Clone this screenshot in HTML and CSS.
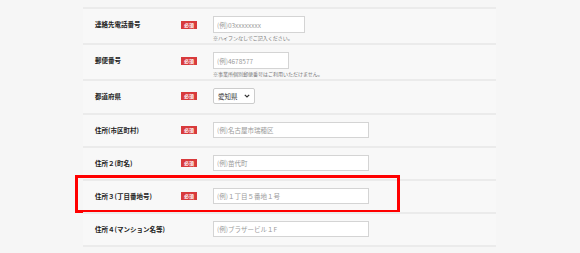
FILE: index.html
```html
<!DOCTYPE html>
<html lang="ja">
	<head>
		<meta charset="UTF-8" />
		<meta name="viewport" content="width=device-width, initial-scale=1.0" />
		<title>お客様情報入力</title>
		<link rel="stylesheet" href="styles.css">
	</head>
	<body>

		<div class="form">
			<div class="row row-note">
				<div class="label">連絡先電話番号</div>
				<div class="req"><span>必須</span></div>
				<div class="field">
					<input class="input w-tel" type="text" placeholder="(例)03xxxxxxxx">
					<p class="note">※ハイフンなしでご記入ください。</p>
				</div>
			</div>

			<div class="row row-note">
				<div class="label">郵便番号</div>
				<div class="req"><span>必須</span></div>
				<div class="field">
					<input class="input w-zip" type="text" placeholder="(例)4678577">
					<p class="note">※事業所個別郵便番号はご利用いただけません。</p>
				</div>
			</div>

			<div class="row row-select">
				<div class="label">都道府県</div>
				<div class="req"><span>必須</span></div>
				<div class="field">
					<div class="select">
						<span>愛知県</span>
						<svg width="6" height="4" viewBox="0 0 6 4"><path d="M0.8 0.8 L3 3 L5.2 0.8" fill="none" stroke="#333" stroke-width="1.2"/></svg>
					</div>
				</div>
			</div>

			<div class="row">
				<div class="label">住所(市区町村)</div>
				<div class="req"><span>必須</span></div>
				<div class="field">
					<input class="input" type="text" placeholder="(例)名古屋市瑞穂区">
				</div>
			</div>

			<div class="row">
				<div class="label">住所２(町名)</div>
				<div class="req"><span>必須</span></div>
				<div class="field">
					<input class="input" type="text" placeholder="(例)苗代町">
				</div>
			</div>

			<div class="row highlight">
				<div class="label">住所３(丁目番地号)</div>
				<div class="req"><span>必須</span></div>
				<div class="field">
					<input class="input" type="text" placeholder="(例)１丁目５番地１号">
				</div>
				<div class="mark"></div>
			</div>

			<div class="row">
				<div class="label">住所４(マンション名等)</div>
				<div class="req"></div>
				<div class="field">
					<input class="input" type="text" placeholder="(例)ブラザービル１F">
				</div>
			</div>
		</div>

	</body>
</html>
```

FILE: styles.css
```css
* {
	box-sizing: border-box;
	margin: 0;
	padding: 0;
}

body {
	background: #f6f6f6;
	font-family: 'Noto Sans CJK JP', 'Noto Sans', sans-serif;
	color: #333;
}

.form {
	width: 413px;
	margin: 7px 0 0 83px;
	border-bottom: 2px solid #ebebeb;
}

.row {
	position: relative;
	display: grid;
	grid-template-columns: 98px 32px 1fr;
	align-items: start;
	padding: 7px 0 8px;
	border-top: 2px solid #ebebeb;
	background: #f8f8f8;
}

.row-note {
	padding-bottom: 1px;
}

.row-select {
	padding-bottom: 9px;
}

.label {
	padding-left: 12px;
	font-size: 6.5px;
	font-weight: bold;
	line-height: 16px;
	color: #222;
	white-space: nowrap;
}

.row-note .label,
.row-note .req {
	line-height: 17px;
	height: 17px;
}

.req {
	height: 16px;
	display: flex;
	align-items: center;
}

.req span {
	display: inline-block;
	width: 16px;
	height: 8px;
	background: #d83a3c;
	color: #fff;
	font-size: 5px;
	font-weight: bold;
	line-height: 8px;
	text-align: center;
}

.field {
	line-height: 0;
}

.input {
	display: block;
	width: 156px;
	height: 16px;
	padding: 0 3px;
	border: 1px solid #d4d4d4;
	background: #fff;
	font-family: inherit;
	font-size: 6.5px;
	color: #333;
	outline: none;
}

.input::placeholder {
	color: #9a9a9a;
}

.w-tel {
	width: 92px;
	height: 17px;
}

.w-zip {
	width: 76px;
	height: 17px;
}

.note {
	margin-top: 1px;
	font-size: 5px;
	line-height: 8px;
	color: #777;
	white-space: nowrap;
}

.select {
	width: 42px;
	height: 16px;
	padding: 0 4px;
	display: flex;
	align-items: center;
	justify-content: space-between;
	border: 1px solid #ccc;
	border-radius: 2px;
	background: #fff;
	font-size: 6.5px;
	line-height: 16px;
	color: #333;
}

/* annotation frame drawn over the row */
.mark {
	position: absolute;
	left: -8px;
	top: -6px;
	width: 325px;
	height: 38px;
	border: 3px solid #f00;
}
```
